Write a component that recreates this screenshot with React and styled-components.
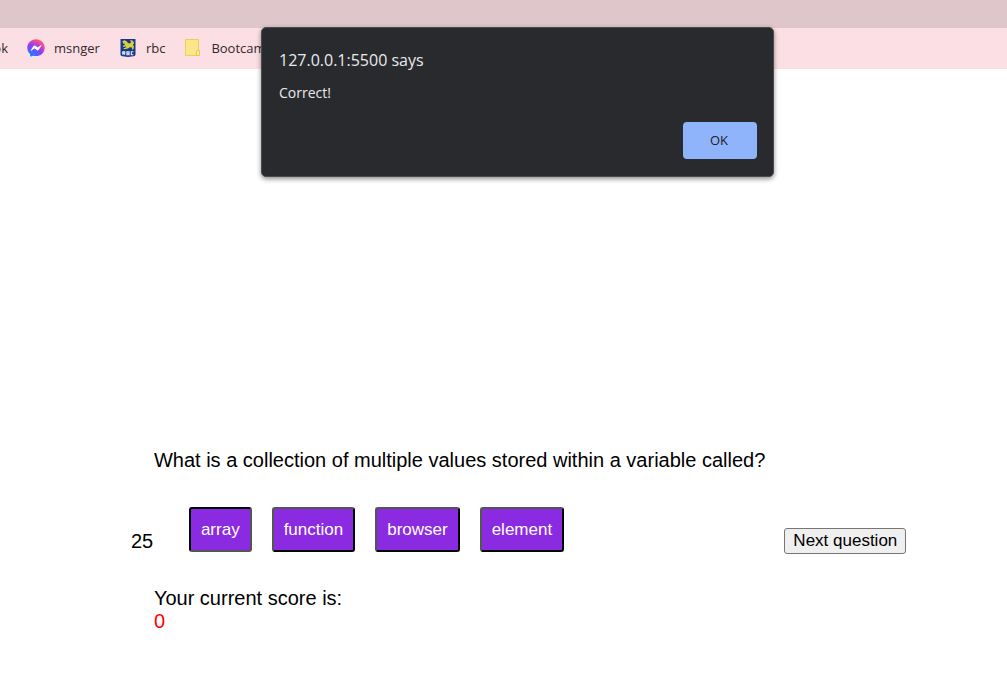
import React from "react";
import styled, { createGlobalStyle } from "styled-components";

const GlobalStyle = createGlobalStyle`
  * { box-sizing: border-box; }
  body {
    margin: 0;
    background: #fff;
    color: #000;
    font-family: "Liberation Sans", Arial, sans-serif;
    font-size: 20px;
    line-height: 23px;
  }
`;

const Page = styled.div`
  position: relative;
  overflow: hidden;
`;

const TabStrip = styled.div`
  height: 28px;
  background: #dec6ca;
`;

const BookmarksBar = styled.nav`
  display: flex;
  align-items: center;
  gap: 19px;
  height: 41px;
  padding-bottom: 1px;
  background: #fcdfe4;
`;

const Bookmark = styled.a`
  display: flex;
  align-items: center;
  gap: 9px;
  color: #2f2a2d;
  font-family: "Open Sans", sans-serif;
  font-size: 13px;
  line-height: 20px;
  text-decoration: none;
  white-space: nowrap;
`;

const ClippedBookmark = styled(Bookmark)`
  justify-content: flex-end;
  width: 8px;
  overflow: hidden;
`;

const Icon = styled.svg`
  display: block;
  flex: none;
  width: 18px;
  height: 18px;
`;

const Dialog = styled.div`
  position: absolute;
  top: 27px;
  left: 261px;
  right: 233px;
  display: flex;
  flex-direction: column;
  padding: 20px 16px 17px 17px;
  border: 1px solid #4a4b4e;
  border-radius: 5px;
  background: #292a2d;
  box-shadow: 0 2px 5px rgba(0, 0, 0, 0.45);
  color: #e8eaed;
  font-family: "Open Sans", sans-serif;
`;

const DialogTitle = styled.h1`
  margin: 0;
  font-size: 16px;
  font-weight: 400;
  line-height: 24px;
`;

const DialogMessage = styled.p`
  margin: 11px 0 19px;
  font-size: 14px;
  line-height: 20px;
`;

const OkButton = styled.button`
  align-self: flex-end;
  width: 74px;
  height: 37px;
  padding: 0 2px 2px 0;
  border: 0;
  border-radius: 4px;
  background: #8fb4fb;
  color: #202124;
  font: 500 13px "Open Sans", sans-serif;
`;

const Quiz = styled.main`
  display: grid;
  grid-template-columns: 23px 1fr auto;
  padding: 380px 10% 48px 13%;
`;

const Question = styled.p`
  grid-column: 2 / -1;
  margin: 0 0 35px;
`;

const Timer = styled.span`
  align-self: end;
  line-height: 26px;
`;

const Answers = styled.div`
  display: flex;
  gap: 20px;
  padding: 0 0 2px 35px;
`;

const Answer = styled.button`
  height: 45px;
  padding: 0 10px;
  border: 2px ${(p) => (p.$pressed ? "inset" : "outset")} #000;
  border-radius: 3px;
  background: #8a2be2;
  color: #fff;
  font: 17px "Liberation Sans", Arial, sans-serif;
`;

const NextButton = styled.button`
  align-self: end;
  height: 26px;
  padding: 0 8px;
  border: 1px solid #767676;
  border-radius: 3px;
  background: #efefef;
  color: #000;
  font: 17px "Liberation Sans", Arial, sans-serif;
`;

const Score = styled.section`
  grid-column: 2 / -1;
  margin-top: 33px;
`;

const ScoreValue = styled.div`
  color: #f00;
`;

const MessengerIcon = () => (
  <Icon viewBox="0 0 18 18" aria-hidden="true">
    <defs>
      <radialGradient id="messenger" cx="0.2" cy="1" r="1.15">
        <stop offset="0" stopColor="#0a8dff" />
        <stop offset="0.55" stopColor="#8a3cff" />
        <stop offset="0.85" stopColor="#f44d8c" />
        <stop offset="1" stopColor="#ff6a70" />
      </radialGradient>
    </defs>
    <path
      fill="url(#messenger)"
      d="M9 .3C4 .3.3 3.9.3 8.7c0 2.5 1 4.7 2.7 6.2l.1 1.8c0 .6.6 1 1.1.7l1.8-.7c1 .3 2 .4 3 .4 5 0 8.7-3.6 8.7-8.4S14 .3 9 .3z"
    />
    <path
      fill="#fff"
      d="M3.8 11.2l2.6-4.1c.5-.7 1.4-.8 2-.3l2 1.5c.2.1.4.1.6 0l2.8-2.1c.3-.3.8.1.6.5l-2.6 4.1c-.5.7-1.4.8-2 .3l-2-1.5c-.2-.1-.4-.1-.6 0l-2.8 2.1c-.3.3-.8-.1-.6-.5z"
    />
  </Icon>
);

const RbcIcon = () => (
  <Icon viewBox="0 0 18 18" aria-hidden="true">
    <path fill="#16398a" d="M1.5 0h15v15.5q0 1.5-2 1.7L9 18l-5.500-.8q-2-.2-2-1.700z" />
    <path
      fill="#d8cf3c"
      d="M3.400 2l2.200-.8 2 1 1.600 2 2 .1 1-1.200-1-1 .4-1.100 2.300.7 1.300 2.200-1.300 1.900 1 1.400-.3 2.800-1.500.7-.1-2.200-2.200-.3-2 1.400-3.400.6-1.200-.8 2.600-1 .2-1.200-2.500.7-.8-1 2.200-1.200-.5-1.200-1.200.3z"
    />
    <path
      fill="none"
      stroke="#e9eef8"
      strokeWidth="1.100"
      d="M3.800 15.700v-3h2v1.300H4l2 1.700M7.900 12.700v3h2.200v-3H7.900v1.500h2.200M14.400 12.700h-2.100v3h2.100"
    />
  </Icon>
);

const FolderIcon = () => (
  <Icon viewBox="0 0 18 18" aria-hidden="true">
    <path fill="#fde68a" stroke="#e9cf5b" d="M1.500 .5h13v11h1v5h-14z" />
    <path fill="#fdeb9c" stroke="#e6c83f" d="M12.500 16.500v-4q0-1 1-1h1q1 0 1 1v3q0 1-1 1z" />
  </Icon>
);

const answers = ["array", "function", "browser", "element"];

export default function App() {
  return (
    <Page>
      <GlobalStyle />
      <TabStrip />
      <BookmarksBar aria-label="Bookmarks">
        <ClippedBookmark href="#">ok</ClippedBookmark>
        <Bookmark href="#">
          <MessengerIcon />
          msnger
        </Bookmark>
        <Bookmark href="#">
          <RbcIcon />
          rbc
        </Bookmark>
        <Bookmark href="#">
          <FolderIcon />
          Bootcamp
        </Bookmark>
      </BookmarksBar>

      <Quiz>
        <Question>What is a collection of multiple values stored within a variable called?</Question>
        <Timer>25</Timer>
        <Answers>
          {answers.map((label) => (
            <Answer key={label} type="button" $pressed={label === "array"}>
              {label}
            </Answer>
          ))}
        </Answers>
        <NextButton type="button">Next question</NextButton>
        <Score>
          <div>Your current score is:</div>
          <ScoreValue>0</ScoreValue>
        </Score>
      </Quiz>

      <Dialog role="alertdialog" aria-labelledby="dialog-title" aria-describedby="dialog-message">
        <DialogTitle id="dialog-title">127.0.0.1:5500 says</DialogTitle>
        <DialogMessage id="dialog-message">Correct!</DialogMessage>
        <OkButton type="button">OK</OkButton>
      </Dialog>
    </Page>
  );
}
